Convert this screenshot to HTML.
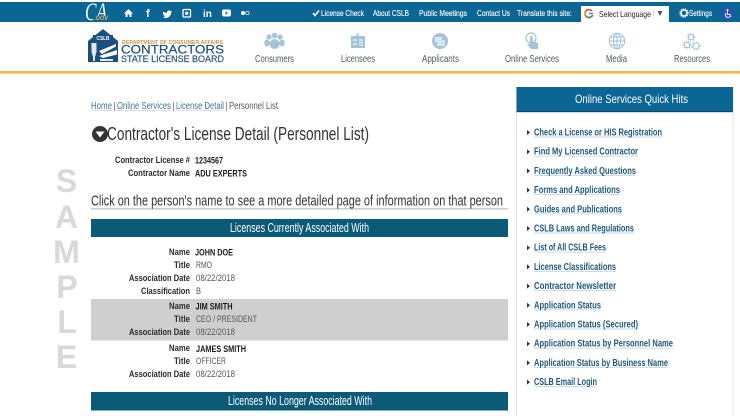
<!DOCTYPE html>
<html><head><meta charset="utf-8"><style>
html,body{margin:0;padding:0;background:#fff;width:740px;height:416px;overflow:hidden}
svg{display:block;filter:blur(.35px)}
text{font-family:"Liberation Sans",sans-serif}
.t{fill:#fff;font-size:8.5px;stroke:#fff;stroke-width:.12}
.n{fill:#4f5a5f;font-size:10px}
.q{fill:#1f5a7d;font-size:10px;font-weight:700}
.l{fill:#2b2b2b;font-size:9.5px;font-weight:700;text-anchor:end}
.v{fill:#555;font-size:9.5px}
.b{fill:#1c1c1c;font-size:9.500px;font-weight:700}
.c{fill:#3f7590;font-size:10px}
.s{fill:#d9d9d9;font-size:32px;font-weight:700;text-anchor:middle}
.i{fill:#a3c5d9}
</style></head><body>
<svg width="740" height="416" viewBox="0 0 740 416" xmlns="http://www.w3.org/2000/svg">
<rect width="740" height="416" fill="#fff"/>
<!-- top bar -->
<rect y="2" width="740" height="20" fill="#0b6595"/>
<text x="85" y="20" font-size="25" font-style="italic" fill="#fff" style="font-family:'Liberation Serif',serif" textLength="22" lengthAdjust="spacingAndGlyphs">CA</text>
<rect x="93" y="15.500" width="16" height="5" fill="#0b6595"/>
<text x="94" y="20" font-size="6" font-weight="700" font-style="italic" fill="#d9b75c" textLength="14" lengthAdjust="spacingAndGlyphs">.GOV</text>
<path d="M128.500 9 L133 13.500 H131.500 V17 H129.500 V14.500 H127.500 V17 H125.500 V13.500 H124 Z" fill="#fff"/>
<text x="146" y="17" font-size="11" font-weight="700" fill="#fff">f</text>
<path d="M163 11.500c1 .8 2.500 1.300 4 1.300-.2-2 2.300-3 3.500-1.600.6-.1 1-.3 1.400-.5-.2.500-.5 1-1 1.200.4 0 .8-.1 1.200-.3-.3.400-.7.800-1.100 1.100 0 3-2.500 5.300-5.500 5.300-1 0-1.900-.3-2.700-.8 1 .1 1.900-.2 2.600-.7-.8 0-1.500-.6-1.700-1.200h.8c-.9-.3-1.500-1-1.500-2 .3.100.5.200.8.200-.8-.6-1-1.500-.6-2.500z" fill="#fff"/>
<rect x="183" y="9.500" width="7.500" height="7.500" rx="1" fill="none" stroke="#fff" stroke-width="1.300"/><circle cx="186.700" cy="13.300" r="1.700" fill="#fff"/>
<text x="203" y="17" font-size="10" font-weight="700" fill="#fff">in</text>
<rect x="222" y="9.500" width="9" height="7" rx="2" fill="#fff"/><path d="M225.500 11.300 L228 13 L225.500 14.700 Z" fill="#0b6595"/>
<circle cx="243" cy="13" r="2" fill="#fff"/><circle cx="247.500" cy="13" r="1.700" fill="none" stroke="#fff" stroke-width=".7"/>
<path d="M313 13 L315 15.500 L319 10.500" stroke="#fff" stroke-width="1.500" fill="none"/>
<text class="t" x="321" y="16" textLength="43" lengthAdjust="spacingAndGlyphs">License Check</text>
<text class="t" x="373" y="16" textLength="36" lengthAdjust="spacingAndGlyphs">About CSLB</text>
<text class="t" x="419" y="16" textLength="48" lengthAdjust="spacingAndGlyphs">Public Meetings</text>
<text class="t" x="477" y="16" textLength="33" lengthAdjust="spacingAndGlyphs">Contact Us</text>
<text class="t" x="517" y="16" textLength="55" lengthAdjust="spacingAndGlyphs">Translate this site:</text>
<rect x="581" y="6" width="88" height="16" fill="#fff"/>
<path d="M592 11 A4 4 0 1 0 592.700 15" fill="none" stroke="#d9453a" stroke-width="1.500"/>
<path d="M588.300 17 A4 4 0 0 0 592.500 15.500" fill="none" stroke="#34a853" stroke-width="1.500"/>
<path d="M585 11.700 A4 4 0 0 0 585 15.300" fill="none" stroke="#f4b400" stroke-width="1.500"/>
<path d="M589 13.500 H593" stroke="#4285f4" stroke-width="1.500"/>
<text x="599" y="17" font-size="8.500" fill="#222" textLength="52" lengthAdjust="spacingAndGlyphs">Select Language</text>
<rect x="653.500" y="10" width=".7" height="7" fill="#bbb"/>
<path d="M657.500 11 H662.500 L660 16 Z" fill="#555"/>
<circle cx="684" cy="13" r="3" fill="none" stroke="#fff" stroke-width="1.500"/>
<circle cx="684" cy="13" r="4.200" fill="none" stroke="#fff" stroke-width="1" stroke-dasharray="1.300 1.000"/>
<text class="t" x="689" y="16" textLength="23" lengthAdjust="spacingAndGlyphs">Settings</text>
<rect x="723" y="8" width="10" height="11" fill="#2a4fc0"/>
<circle cx="727.500" cy="10" r="1" fill="#fff"/><path d="M727.500 11 V14.500 H730 L731 17 M726 13 A2.500 2.500 0 1 0 730 16.500" fill="none" stroke="#fff" stroke-width=".9"/>
<!-- logo -->
<path d="M88 41 V62 H118 V41 L103 29 Z" fill="#1d4f7c"/>
<rect x="93" y="35" width="20" height="6" fill="#1d4f7c"/>
<text x="103" y="40" font-size="5" font-weight="700" fill="#fff" text-anchor="middle" textLength="13" lengthAdjust="spacingAndGlyphs">CSLB</text>
<path d="M91.500 43 H96.500 V52 L95 57 V61 H93 V57 L91.500 52 Z" fill="#dfe8ee"/>
<path d="M99 51 L116 44 V46.500 L102 54 Z M99 56 L117 50 V54.500 L103 58 Z" fill="#fff"/>
<rect x="100" y="59" width="13" height="2" fill="#dfe8ee"/>
<text x="122" y="44" font-size="5" font-weight="700" fill="#c9973f" textLength="101" lengthAdjust="spacingAndGlyphs">DEPARTMENT OF CONSUMER AFFAIRS</text>
<text x="121" y="53.500" font-size="12" fill="#1d4f7c" stroke="#1d4f7c" stroke-width=".2" textLength="103" lengthAdjust="spacingAndGlyphs">CONTRACTORS</text>
<text x="121" y="62" font-size="9.500" fill="#1d4f7c" stroke="#1d4f7c" stroke-width=".15" textLength="103" lengthAdjust="spacingAndGlyphs">STATE LICENSE BOARD</text>
<!-- nav icons -->
<g class="i">
<circle cx="269" cy="37" r="2.600"/><circle cx="274.500" cy="35.500" r="2.800"/><circle cx="280" cy="37" r="2.600"/>
<ellipse cx="267" cy="43" rx="2.800" ry="3.500"/><ellipse cx="282" cy="43" rx="2.800" ry="3.500"/><ellipse cx="274.500" cy="44" rx="5" ry="5"/>
<path d="M351 36 H356.500 V33.500 H358.500 V36 H365 V48 H351 Z"/>
<circle cx="440" cy="41" r="8"/>
<circle cx="531" cy="38" r="5" fill="none" stroke="#a3c5d9" stroke-width="1.200"/>
<path d="M530 36 H532.500 V41 L538 43 V49 H531 L527 44 L530 44 Z"/>
</g>
<path d="M353 40 H357 M353 44 H357 M359 40 H363 M359 42.500 H363 M359 45 H363" stroke="#fff" stroke-width="1"/>
<rect x="435" y="37" width="7" height="5" fill="#fff" opacity=".6"/><rect x="437" y="40" width="8" height="6" fill="#d6e5ee"/>
<g fill="none" stroke="#9dc0d6" stroke-width=".9">
<circle cx="617" cy="41" r="7.700"/><ellipse cx="617" cy="41" rx="3.500" ry="7.700"/><path d="M617 33.300 V48.700 M609.300 41 H624.700 M610.500 37 H623.500 M610.500 45 H623.500"/>
</g>
<g fill="none" stroke="#8db4cc" stroke-width=".8">
<circle cx="691" cy="37" r="2.600"/><circle cx="687" cy="45" r="2.700"/><circle cx="696" cy="46" r="3"/>
<circle cx="691" cy="37" r="3.800" stroke-dasharray="1.200 1.600"/><circle cx="687" cy="45" r="3.900" stroke-dasharray="1.200 1.600"/><circle cx="696" cy="46" r="4.200" stroke-dasharray="1.200 1.600"/>
</g>
<text class="n" x="255" y="62" textLength="39" lengthAdjust="spacingAndGlyphs">Consumers</text>
<text class="n" x="341" y="62" textLength="34" lengthAdjust="spacingAndGlyphs">Licensees</text>
<text class="n" x="422" y="62" textLength="37" lengthAdjust="spacingAndGlyphs">Applicants</text>
<text class="n" x="505" y="62" textLength="54" lengthAdjust="spacingAndGlyphs">Online Services</text>
<text class="n" x="606" y="62" textLength="21" lengthAdjust="spacingAndGlyphs">Media</text>
<text class="n" x="674" y="62" textLength="36" lengthAdjust="spacingAndGlyphs">Resources</text>
<rect y="71" width="740" height="2.500" fill="#f2b94a"/>
<rect y="73.500" width="740" height="1.500" fill="#fdf3dc"/>
<!-- breadcrumb -->
<text class="c" x="91" y="109" textLength="21" lengthAdjust="spacingAndGlyphs">Home</text>
<text class="c" x="117" y="109" textLength="54" lengthAdjust="spacingAndGlyphs">Online Services</text>
<text class="c" x="176" y="109" textLength="48" lengthAdjust="spacingAndGlyphs">License Detail</text>
<text x="229" y="109" font-size="10" fill="#555" textLength="49" lengthAdjust="spacingAndGlyphs">Personnel List</text>
<rect x="114" y="102" width=".7" height="9" fill="#666"/><rect x="173" y="102" width=".7" height="9" fill="#666"/><rect x="226" y="102" width=".7" height="9" fill="#666"/>
<path d="M91 110.500 H112 M117 110.500 H171 M176 110.500 H224" stroke="#c8dae3" stroke-width=".8"/>
<!-- heading -->
<circle cx="100" cy="134" r="8" fill="#333"/><path d="M95.500 131.500 H104.500 L100 137.500 Z" fill="#fff"/>
<text x="107" y="140" font-size="18" fill="#333" textLength="262" lengthAdjust="spacingAndGlyphs">Contractor's License Detail (Personnel List)</text>
<text class="l" x="190" y="163" textLength="75" lengthAdjust="spacingAndGlyphs">Contractor License #</text>
<text class="b" x="195" y="163.500" textLength="28" lengthAdjust="spacingAndGlyphs">1234567</text>
<text class="l" x="190" y="176" textLength="62" lengthAdjust="spacingAndGlyphs">Contractor Name</text>
<text class="b" x="195" y="176.500" textLength="52" lengthAdjust="spacingAndGlyphs">ADU EXPERTS</text>
<text x="91" y="205.500" font-size="15" fill="#333" textLength="412" lengthAdjust="spacingAndGlyphs">Click on the person's name to see a more detailed page of information on that person</text>
<rect x="91" y="208.500" width="417" height=".8" fill="#999"/>
<!-- bar 1 -->
<rect x="91" y="219" width="417" height="18" fill="#0a5a78"/>
<text x="230" y="232" font-size="12.500" fill="#fff" textLength="139" lengthAdjust="spacingAndGlyphs">Licenses Currently Associated With</text>
<!-- rows -->
<rect x="91" y="299" width="417" height="41.500" fill="#cfcfcf"/>
<text class="l" x="190" y="255" textLength="21" lengthAdjust="spacingAndGlyphs">Name</text><text class="b" x="195" y="255.500" textLength="38" lengthAdjust="spacingAndGlyphs">JOHN DOE</text>
<text class="l" x="190" y="268" textLength="16" lengthAdjust="spacingAndGlyphs">Title</text><text class="v" x="196" y="268" textLength="16" lengthAdjust="spacingAndGlyphs">RMO</text>
<text class="l" x="190" y="281" textLength="61" lengthAdjust="spacingAndGlyphs">Association Date</text><text class="v" x="196" y="281" textLength="39" lengthAdjust="spacingAndGlyphs">08/22/2018</text>
<text class="l" x="190" y="294" textLength="49" lengthAdjust="spacingAndGlyphs">Classification</text><text class="v" x="196" y="294" textLength="5" lengthAdjust="spacingAndGlyphs">B</text>
<text class="l" x="190" y="309" textLength="21" lengthAdjust="spacingAndGlyphs">Name</text><text class="b" x="195.500" y="309.500" textLength="37" lengthAdjust="spacingAndGlyphs">JIM SMITH</text>
<text class="l" x="190" y="322" textLength="16" lengthAdjust="spacingAndGlyphs">Title</text><text class="v" x="196" y="322" textLength="61" lengthAdjust="spacingAndGlyphs">CEO / PRESIDENT</text>
<text class="l" x="190" y="335" textLength="61" lengthAdjust="spacingAndGlyphs">Association Date</text><text class="v" x="196" y="335" textLength="39" lengthAdjust="spacingAndGlyphs">08/22/2018</text>
<text class="l" x="190" y="351" textLength="21" lengthAdjust="spacingAndGlyphs">Name</text><text class="b" x="196" y="352" textLength="50" lengthAdjust="spacingAndGlyphs">JAMES SMITH</text>
<text class="l" x="190" y="364" textLength="16" lengthAdjust="spacingAndGlyphs">Title</text><text class="v" x="196" y="364" textLength="30" lengthAdjust="spacingAndGlyphs">OFFICER</text>
<text class="l" x="190" y="377" textLength="61" lengthAdjust="spacingAndGlyphs">Association Date</text><text class="v" x="196" y="377" textLength="39" lengthAdjust="spacingAndGlyphs">08/22/2018</text>
<rect x="91" y="392" width="417" height="18.500" fill="#0a5a78"/>
<text x="228" y="405" font-size="12.500" fill="#fff" textLength="144" lengthAdjust="spacingAndGlyphs">Licenses No Longer Associated With</text>
<!-- SAMPLE -->
<text class="s" x="66.500" y="192">S</text>
<text class="s" x="66.500" y="228">A</text>
<text class="s" x="66.500" y="263">M</text>
<text class="s" x="67" y="298">P</text>
<text class="s" x="67" y="333">L</text>
<text class="s" x="66.500" y="368">E</text>
<!-- sidebar -->
<rect x="516.500" y="87.500" width="216.500" height="329" fill="#fff" stroke="#e2e6e9"/>
<rect x="516.500" y="87" width="216.500" height="25" fill="#0b6595"/>
<rect x="516.500" y="111" width="216.500" height="1.200" fill="#0a4a6c"/>
<text x="575" y="103" font-size="12" fill="#fff" textLength="113" lengthAdjust="spacingAndGlyphs">Online Services Quick Hits</text>
<g fill="#333">
<path d="M527 130 l3 2.500 l-3 2.500z"/><path d="M527 149.200 l3 2.500 l-3 2.500z"/><path d="M527 168.400 l3 2.500 l-3 2.500z"/><path d="M527 187.600 l3 2.500 l-3 2.500z"/><path d="M527 206.800 l3 2.500 l-3 2.500z"/><path d="M527 226 l3 2.500 l-3 2.500z"/><path d="M527 245.200 l3 2.500 l-3 2.500z"/><path d="M527 264.400 l3 2.500 l-3 2.500z"/><path d="M527 283.600 l3 2.500 l-3 2.500z"/><path d="M527 302.800 l3 2.500 l-3 2.500z"/><path d="M527 322 l3 2.500 l-3 2.500z"/><path d="M527 341.200 l3 2.500 l-3 2.500z"/><path d="M527 360.400 l3 2.500 l-3 2.500z"/><path d="M527 379.600 l3 2.500 l-3 2.500z"/>
</g>
<g stroke="#c5d9e4" stroke-width=".9">
<path d="M534 137 H662 M534 156.200 H638 M534 175.400 H636 M534 194.600 H620 M534 213.800 H622 M534 233 H634 M534 252.200 H606 M534 271.400 H616 M534 290.600 H616 M534 309.800 H601 M534 329 H638 M534 348.200 H673 M534 367.400 H668 M534 386.600 H597"/>
</g>
<text class="q" x="534" y="135.500" textLength="128" lengthAdjust="spacingAndGlyphs">Check a License or HIS Registration</text>
<text class="q" x="534" y="154.700" textLength="104" lengthAdjust="spacingAndGlyphs">Find My Licensed Contractor</text>
<text class="q" x="534" y="173.900" textLength="102" lengthAdjust="spacingAndGlyphs">Frequently Asked Questions</text>
<text class="q" x="534" y="193.100" textLength="86" lengthAdjust="spacingAndGlyphs">Forms and Applications</text>
<text class="q" x="534" y="212.300" textLength="88" lengthAdjust="spacingAndGlyphs">Guides and Publications</text>
<text class="q" x="534" y="231.500" textLength="100" lengthAdjust="spacingAndGlyphs">CSLB Laws and Regulations</text>
<text class="q" x="534" y="250.700" textLength="72" lengthAdjust="spacingAndGlyphs">List of All CSLB Fees</text>
<text class="q" x="534" y="269.900" textLength="82" lengthAdjust="spacingAndGlyphs">License Classifications</text>
<text class="q" x="534" y="289.100" textLength="82" lengthAdjust="spacingAndGlyphs">Contractor Newsletter</text>
<text class="q" x="534" y="308.300" textLength="67" lengthAdjust="spacingAndGlyphs">Application Status</text>
<text class="q" x="534" y="327.500" textLength="104" lengthAdjust="spacingAndGlyphs">Application Status (Secured)</text>
<text class="q" x="534" y="346.700" textLength="139" lengthAdjust="spacingAndGlyphs">Application Status by Personnel Name</text>
<text class="q" x="534" y="365.900" textLength="134" lengthAdjust="spacingAndGlyphs">Application Status by Business Name</text>
<text class="q" x="534" y="385.100" textLength="63" lengthAdjust="spacingAndGlyphs">CSLB Email Login</text>
</svg>
</body></html>
